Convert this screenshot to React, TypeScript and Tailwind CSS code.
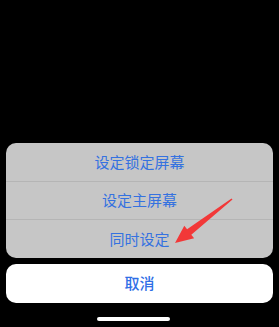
import React from "react";

const rows = ["设定锁定屏幕", "设定主屏幕", "同时设定"];

const App = () => {
  return (
    <div
      className="relative w-[279px] h-[327px] bg-black flex flex-col justify-end overflow-hidden"
      style={{ fontFamily: '"Noto Sans CJK SC", "Noto Sans", sans-serif' }}
    >
      <div className="mx-[6px] rounded-[10px] bg-[#c6c6c6] overflow-hidden flex flex-col">
        {rows.map((label, idx) => (
          <React.Fragment key={idx}>
            {idx > 0 && <div className="h-px bg-[#b5b5b5]" />}
            <div
              className={`${
                idx === 1 ? "h-[37px]" : "h-[38px]"
              } flex items-center justify-center text-[15px] text-[#3572e0]`}
            >
              {label}
            </div>
          </React.Fragment>
        ))}
      </div>
      <div className="mx-[6px] mt-[6px] h-[39px] rounded-[10px] bg-white flex items-center justify-center text-[15px] font-medium text-[#2f6fe6]">
        取消
      </div>
      <div className="h-[24px] flex items-start justify-center pt-[14px]">
        <div className="w-[73px] h-[4px] rounded-full bg-white -ml-[12px]" />
      </div>
      {/* annotation arrow */}
      <svg
        className="absolute left-0 top-0 pointer-events-none"
        width="279"
        height="327"
        viewBox="0 0 279 327"
      >
        <polygon
          points="232.5,199.6 191.3,234.8 194.1,238.3 175,243 184.3,225.7 187.1,229.2 231.5,198.4"
          fill="#f23838"
        />
      </svg>
    </div>
  );
};

export default App;
